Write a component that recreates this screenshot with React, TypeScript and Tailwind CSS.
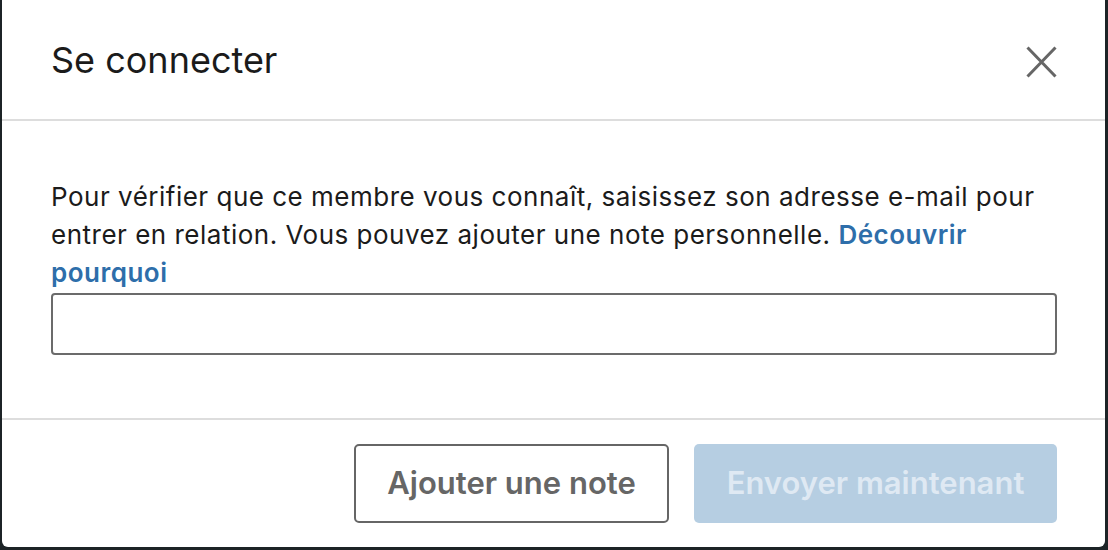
export default function App() {
  return (
    <div className="h-[550px] w-[1108px] bg-[#1c2326] pb-[3px] pl-[2px] pr-[3px] font-['Inter','Liberation_Sans',sans-serif]">
      <div className="flex h-full w-full flex-col rounded-b-[6px] bg-white">
        <header className="flex h-[121px] shrink-0 items-center justify-between border-b-2 border-[#dddddd] pl-[49px] pr-[48px]">
          <h2 className="text-[36px] font-normal leading-none text-[#1b1b1b]">Se connecter</h2>
          <button type="button" aria-label="Fermer" className="mt-[4px] flex h-[32px] w-[32px] items-center justify-center text-[#666666]">
            <svg width="31" height="32" viewBox="0 0 31 32" fill="none" stroke="currentColor" strokeWidth={3}>
              <path d="M1.5 1.5L29.5 30.5M29.5 1.5L1.5 30.5" />
            </svg>
          </button>
        </header>

        <div className="flex flex-1 flex-col pb-[62px] pl-[49px] pr-[48px] pt-[57px]">
          <p className="text-[26px] leading-[38px] tracking-[0.5px] text-[#1b1b1b]">
            Pour vérifier que ce membre vous connaît, saisissez son adresse e-mail pour entrer en relation. Vous pouvez ajouter une note personnelle.{" "}
            <a href="#" className="font-semibold text-[#2e6eaa]">
              Découvrir pourquoi
            </a>
          </p>
          <input
            type="email"
            className="mt-[1px] h-[62px] w-full rounded-[4px] border-2 border-[#6b6b6b] px-3 text-[25px] outline-none"
          />
        </div>

        <footer className="flex shrink-0 items-start justify-end gap-[25px] border-t-2 border-[#dddddd] pb-[24px] pr-[48px] pt-[24px]">
          <button
            type="button"
            className="h-[79px] w-[315px] rounded-[5px] border-2 border-[#666666] text-[31px] font-semibold text-[#666666]"
          >
            Ajouter une note
          </button>
          <button
            type="button"
            disabled
            className="h-[79px] w-[363px] rounded-[5px] bg-[#b6cee2] text-[31px] font-semibold text-[#dfe9f3]"
          >
            Envoyer maintenant
          </button>
        </footer>
      </div>
    </div>
  );
}
